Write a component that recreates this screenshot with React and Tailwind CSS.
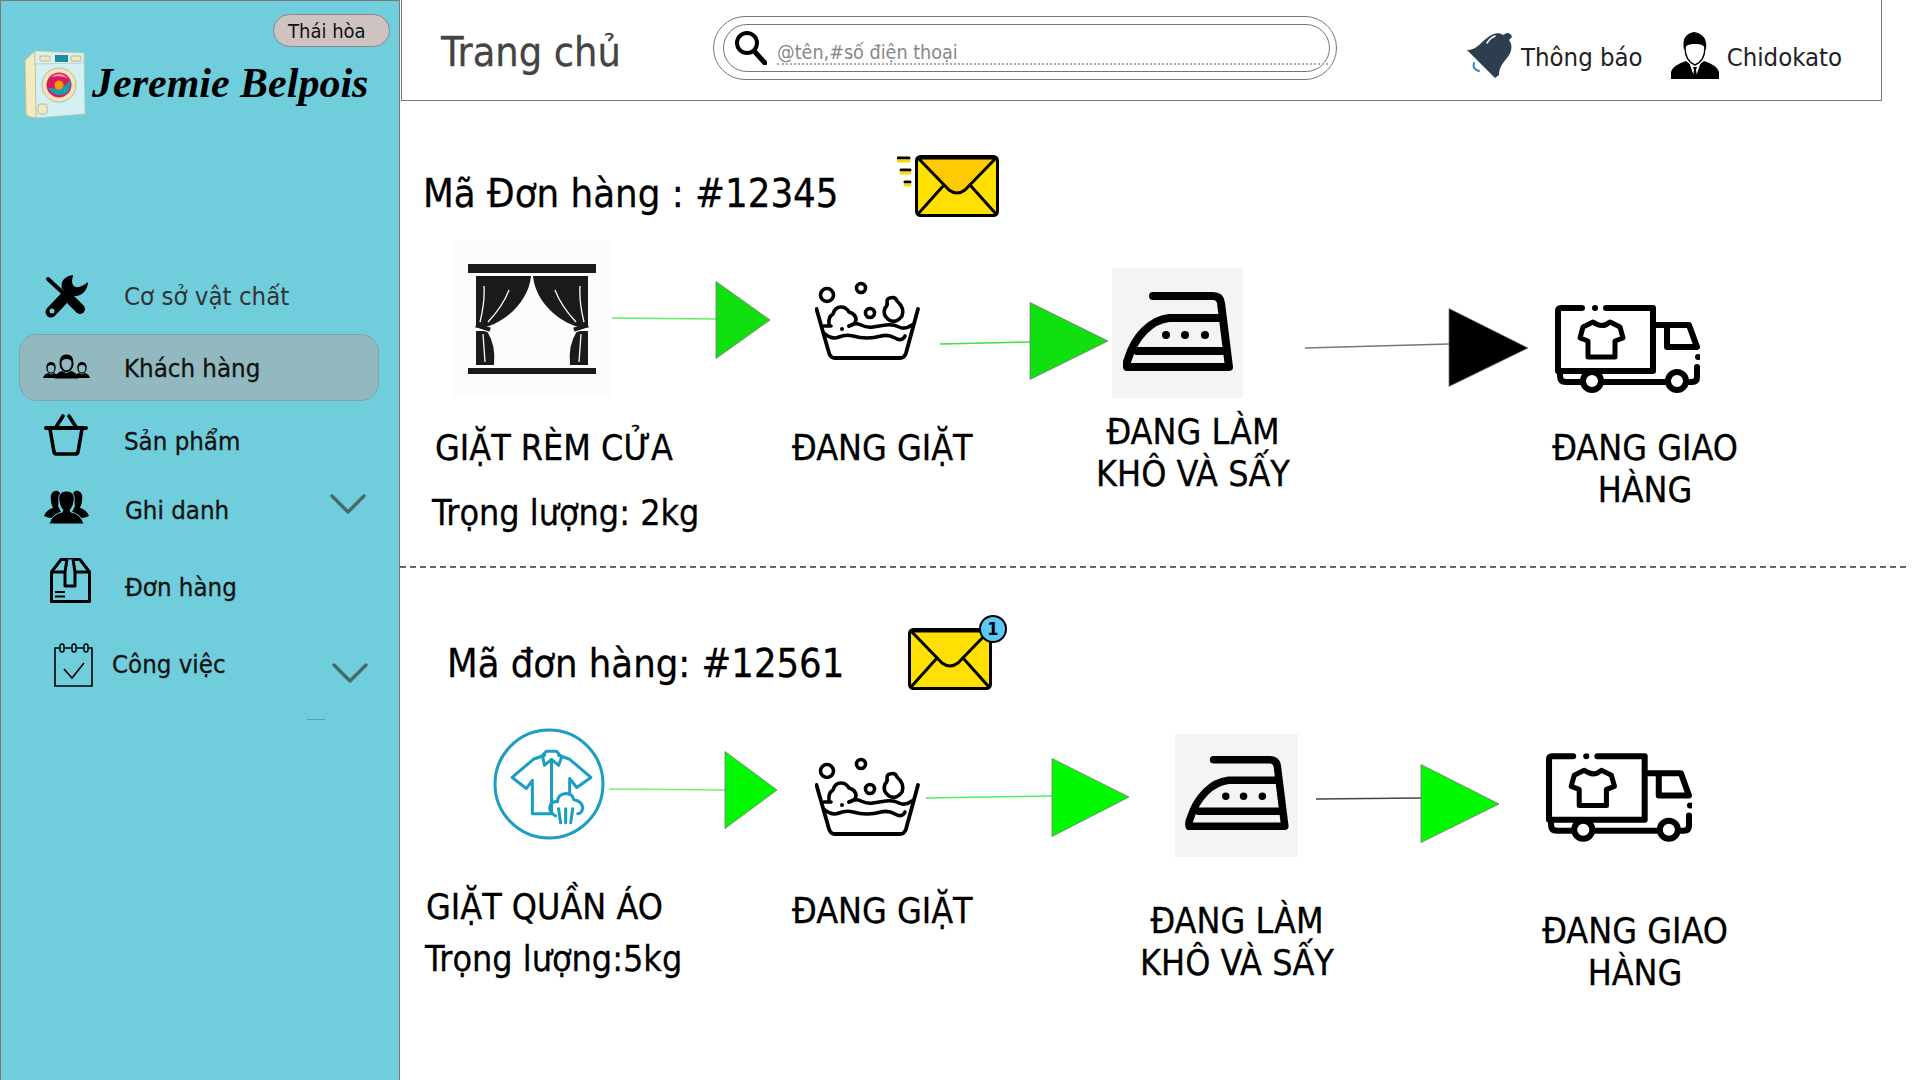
const font = "font-['DejaVu_Sans_Condensed','DejaVu_Sans',sans-serif]";

function Washer() {
  return (
    <svg viewBox="0 0 62 68" className="w-[62px] h-[68px] shrink-0">
      <path d="M1 10 L11 1 L60 3 L61 64 L12 68 Q3 67 2 64 Z" fill="#D3F1F3" stroke="#B9C9B5" strokeWidth="0.8" />
      <path d="M1 10 L11 1 L12 68 Q3 67 2 64 Z" fill="#F2EBC0" stroke="#B9B58F" strokeWidth="0.8" />
      <path d="M11 1 L60 3 L60 13 L11 14 Z" fill="#DDEFEA" stroke="#A9BDB5" strokeWidth="0.6" />
      <rect x="16" y="6" width="10" height="5" rx="1" fill="#EFE9C4" stroke="#8F9A86" strokeWidth="0.6" />
      <rect x="31" y="5" width="13" height="7" fill="#1E8CA0" />
      <rect x="47" y="6" width="10" height="5" rx="1" fill="#EFE9C4" stroke="#8F9A86" strokeWidth="0.6" />
      <circle cx="35" cy="35" r="17" fill="#F3E7B9" stroke="#B9A97F" strokeWidth="0.8" />
      <circle cx="35" cy="35" r="12.5" fill="#D81B60" />
      <path d="M24 38 Q30 48 42 44 Q48 38 46 30 Q40 40 24 38Z" fill="#1E9AA8" />
      <path d="M27 27 Q35 20 44 28 Q36 25 27 27Z" fill="#F48FB1" />
      <circle cx="35" cy="35" r="4.5" fill="#FF9800" />
      <rect x="14" y="54" width="9" height="10" rx="2" fill="#EFE9C4" stroke="#A9A47F" strokeWidth="0.7" />
    </svg>
  );
}

function Tools() {
  return (
    <svg viewBox="0 0 44 44" className="w-[44px] h-[44px]">
      <path d="M3 4 L28 27" stroke="#000" strokeWidth="4" strokeLinecap="round" />
      <path d="M27 26 L35 34" stroke="#000" strokeWidth="10" strokeLinecap="round" />
      <path d="M6 37 L24 18" stroke="#000" strokeWidth="11" strokeLinecap="round" />
      <path d="M17 14 C15 6 20 1 28 0 L27 6 Q27 11 31 12 Q36 13 43 7 C43 16 35 23 26 21 Z" fill="#000" />
      <circle cx="7" cy="36" r="2.5" fill="#70CDDC" />
    </svg>
  );
}

function ClientPerson({ x, y, s }) {
  return (
    <g transform={`translate(${x} ${y}) scale(${s})`}>
      <ellipse cx="8" cy="6" rx="4" ry="5.2" fill="none" stroke="#000" strokeWidth="1.3" />
      <path d="M3.6 6 Q3 0 8 0 Q13 0 12.400 6 Q11 3 8 3 Q5 3 3.600 6Z" fill="#000" />
      <path d="M0 16 Q1 12 5 11 L8 12.500 L11 11 Q15 12 16 16 Z" fill="#000" />
    </g>
  );
}

function Clients() {
  return (
    <svg viewBox="0 0 47 25" className="w-[47px] h-[25px]">
      <ClientPerson x={0} y={8} s={1} />
      <ClientPerson x={31} y={8} s={1} />
      <ClientPerson x={11.5} y={0.5} s={1.5} />
    </svg>
  );
}

function Basket() {
  return (
    <svg viewBox="0 -3 44 43" className="w-[44px] h-[43px]" fill="none" stroke="#000" strokeWidth="3.6" strokeLinejoin="round" strokeLinecap="round">
      <path d="M2 11 H42" strokeWidth="4" />
      <path d="M6 12 L10 35 Q10.5 37 13 37 H31 Q33.5 37 34 35 L38 12" />
      <path d="M12 10 L19 -1 M32 10 L25 -1" />
    </svg>
  );
}

function Users() {
  return (
    <svg viewBox="0 0 45 34" className="w-[45px] h-[34px]" fill="#000">
      <path d="M0 26 Q2 20 9 18 Q6 12 7 5 Q9 0 14 1 L16 3 L14 16 L18 24 L8 28 Q4 28 0 26Z" />
      <path d="M45 26 Q43 20 36 18 Q39 12 38 5 Q36 0 31 1 L29 3 L31 16 L27 24 L37 28 Q41 28 45 26Z" />
      <path d="M22.5 1 C16 1 14 6 15 11 C15.5 15 17 18 19 20 L18 22 Q8 24 5 34 H40 Q37 24 27 22 L26 20 C28 18 29.500 15 30 11 C31 6 29 1 22.5 1Z" stroke="#70CDDC" strokeWidth="1" />
    </svg>
  );
}

function BoxIcon() {
  return (
    <svg viewBox="0 0 41 45" className="w-[41px] h-[45px]" fill="none" stroke="#000" strokeWidth="3" strokeLinejoin="round">
      <path d="M1.500 14 L11 1.500 H30 L39.500 14 V43.500 H1.500 Z" />
      <path d="M1.500 14 H39.500" />
      <path d="M17 1.500 L15 14 V28 H25 V14 L23 1.500" fill="#70CDDC" />
      <path d="M5 34 H15 M5 38.500 H15" strokeWidth="2" />
    </svg>
  );
}

function Calendar() {
  return (
    <svg viewBox="0 0 40 44" className="w-[40px] h-[44px]" fill="none" stroke="#000" strokeWidth="1.4">
      <path d="M1 5 H38 V43 H1 Z" strokeWidth="1.600" />
      <rect x="6" y="1" width="4" height="8" rx="2" fill="#70CDDC" />
      <rect x="18" y="1" width="4" height="8" rx="2" fill="#70CDDC" />
      <rect x="30" y="1" width="4" height="8" rx="2" fill="#70CDDC" />
      <path d="M10 26 L18 35 L30 20" strokeWidth="1.600" />
    </svg>
  );
}

function Chevron({ className }) {
  return (
    <svg viewBox="0 0 36 20" className={className} fill="none" stroke="#456B70" strokeWidth="3.400" strokeLinecap="round" strokeLinejoin="round">
      <path d="M2 2 L18 18 L34 2" />
    </svg>
  );
}

function SearchGlass() {
  return (
    <svg viewBox="0 0 33 35" className="w-[33px] h-[35px] shrink-0" fill="none" stroke="#000">
      <circle cx="13" cy="13" r="10" strokeWidth="4" />
      <path d="M21 22 L31 33" strokeWidth="5" strokeLinecap="round" />
    </svg>
  );
}

function Bell() {
  return (
    <svg viewBox="0 0 46 46" className="w-[46px] h-[46px] shrink-0">
      <path d="M0 17 C10 17 14 9 20 5 C26 0 32 -1 36 2 L40 0 Q44 0 45 4 L42 7 C46 12 45 19 40 25 C36 30 32 34 32 42 L28 45 Z" fill="#2C3E50" />
      <path d="M20 10 Q23 5 28 3" fill="none" stroke="#fff" strokeWidth="1.600" strokeLinecap="round" />
      <path d="M7 30 Q5 36 12 38" fill="none" stroke="#2E86C1" strokeWidth="2" strokeLinecap="round" />
    </svg>
  );
}

function Agent() {
  return (
    <svg viewBox="0 0 48 48" className="w-[48px] h-[48px] shrink-0">
      <path d="M0 47 V40 Q2 33 15 29 L24 36 L33 29 Q46 33 48 40 V47 Z" fill="#000" />
      <path d="M18 30 L24 47 L30 30 L24 35Z" fill="#fff" />
      <path d="M22 35 H26 L25 38 L26.500 47 H21.500 L23 38Z" fill="#000" />
      <path d="M14 15 Q14 29 24 33 Q34 29 34 15" fill="#fff" stroke="#000" strokeWidth="1.400" />
      <path d="M13 18 Q10 2 23 0 Q37 2 35 18 Q33 11 24 12 Q15 11 13 18Z" fill="#000" />
    </svg>
  );
}

function Mail({ className, motion, viewBox }) {
  return (
    <svg viewBox={viewBox} className={className}>
      {motion && (
        <g strokeWidth="3" strokeLinecap="round">
          <path d="M1 3 H12" stroke="#000" /><path d="M1 6 H12" stroke="#FFD800" />
          <path d="M4 15 H13" stroke="#000" /><path d="M4 18 H13" stroke="#FFD800" />
          <path d="M8 27 H13" stroke="#000" /><path d="M8 30 H13" stroke="#FFD800" />
        </g>
      )}
      <g transform={motion ? "translate(18 0)" : ""}>
        <rect x="1.500" y="1.500" width="81" height="59" rx="4" fill="#FFE000" stroke="#000" strokeWidth="3" />
        <path d="M3 3 H81 L50 35 Q42 41 34 35 Z" fill={motion ? "#FFCB00" : "#FFE000"} stroke="#000" strokeWidth="3" strokeLinejoin="round" />
        <path d="M3 59 L29 30 M81 59 L55 30" stroke="#000" strokeWidth="3" strokeLinecap="round" />
      </g>
    </svg>
  );
}

function Curtain() {
  return (
    <svg viewBox="0 0 158 158" className="w-[158px] h-[158px]">
      <rect width="158" height="158" fill="#FCFCFC" />
      <rect x="15" y="24" width="128" height="9" fill="#1a1a1a" />
      <rect x="15" y="128" width="128" height="6" fill="#1a1a1a" />
      <path d="M23 36 H78 C76 58 58 78 36 86 L23 88 Z" fill="#1a1a1a" />
      <path d="M135 36 H80 C82 58 100 78 122 86 L135 88 Z" fill="#1a1a1a" />
      <path d="M23 91 H34 Q43 105 41 125 H23 Z" fill="#1a1a1a" />
      <path d="M135 91 H124 Q115 105 117 125 H135 Z" fill="#1a1a1a" />
      <path d="M23 85 L37 90 M135 85 L121 90" stroke="#1a1a1a" strokeWidth="5" />
      <path d="M27 82 Q32 62 31 46 M35 82 Q50 66 56 50 M131 82 Q126 62 127 46 M123 82 Q108 66 102 50 M30 94 L32 122 M128 94 L126 122 M23 88 L36 92 M135 88 L122 92" stroke="#fcfcfc" strokeWidth="1.300" fill="none" />
    </svg>
  );
}

function Basin({ className }) {
  return (
    <svg viewBox="0 0 107 81" className={className} fill="none" stroke="#000" strokeWidth="3.600" strokeLinecap="round" strokeLinejoin="round">
      <path d="M1.500 28 L14 72 Q15.500 77 20 77 H85 Q89.500 77 91 72 L103 28" strokeWidth="3.800" />
      <path d="M9 45 H16 M34 45 Q40 41 46 44 T58 46 T71 44 T84 46 T97 44" />
      <path d="M10 53 Q17 59 24 56 T38 55 T52 57 T66 55 T80 57 T90 55" />
      <circle cx="12" cy="14" r="6.500" />
      <circle cx="46" cy="7" r="4.500" />
      <circle cx="55" cy="32" r="4.500" />
      <path d="M75 17 Q80 15 82 20 Q90 27 87 35 Q81 43 74 39 Q67 34 70 27 Q73 24 72 21 Q72 17 75 17Z" />
      <path d="M14 43 Q13 36 18 33 Q20 26 26 26 Q31 26 34 31 Q41 33 41 39 Q40 44 34 45" />
      <circle cx="27" cy="48" r="2" fill="#000" stroke="none" />
    </svg>
  );
}

function Iron({ className }) {
  return (
    <svg viewBox="0 0 110 80" className={className} fill="none" stroke="#000" strokeWidth="8" strokeLinecap="round" strokeLinejoin="round">
      <path d="M30 5 H90 Q97 5 98 12 L106 76 H4 Q3 72 5 68 C12 45 28 29 46 27 H99" />
      <path d="M14 60 H103" />
      <g fill="#000" stroke="none">
        <circle cx="43" cy="44" r="4" /><circle cx="62" cy="44" r="4" /><circle cx="82" cy="44" r="4" />
      </g>
    </svg>
  );
}

function Truck({ className }) {
  return (
    <svg viewBox="0 0 145 88" className={className} fill="none" stroke="#000" strokeWidth="6" strokeLinecap="round" strokeLinejoin="round">
      <path d="M27 3 H6 Q3 3 3 6 V65 M51 3 H98 V66 H3" />
      <circle cx="40" cy="3" r="3" fill="#000" stroke="none" />
      <path d="M99 20 H134 L142 42 H112 V20" />
      <circle cx="143" cy="52" r="3" fill="#000" stroke="none" />
      <path d="M142 62 V72 Q142 77 137 77 H134 M110 77 H49 M25 77 H11 Q5 77 5 71 V67" />
      <circle cx="37" cy="76" r="9" />
      <circle cx="122" cy="76" r="9" />
      <path d="M38 17 L28 22 L25 33 L33 36 V52 H60 V36 L68 33 L65 22 L55 17 Q47 24 38 17 Z" strokeWidth="5" />
    </svg>
  );
}

function ShirtCircle({ className }) {
  return (
    <svg viewBox="0 0 111 111" className={className} fill="none" stroke="#1B9EC2" strokeWidth="3" strokeLinejoin="round" strokeLinecap="round">
      <ellipse cx="55.500" cy="55.500" rx="53.500" ry="53.500" />
      <path d="M51 27 L40 31 L19 49 L33 60 L39 52 V85 H59 M65 27 L76 31 L97 49 L83 59 L76 50 V66" />
      <path d="M58 32 V84" />
      <path d="M49 27 L53 23 H63 L68 29 L65 37 L58 31 L51 37 Z" />
      <path d="M62 87 Q54 83 57 76 Q60 72 64 73 Q64 66 72 65 Q79 65 80 71 Q88 72 89 79 Q88 85 84 85" />
      <path d="M65 80 L67 94 M72 80 V94 M79 80 L77 94" />
    </svg>
  );
}

function Arrow({ className, w, h, y1, y2, tx, apex, fill, line }) {
  return (
    <svg viewBox={`0 0 ${w} ${h}`} className={className}>
      <path d={`M0 ${y1} L${tx} ${y2}`} stroke={line} strokeWidth="1.500" fill="none" />
      <path d={`M${tx} 0.500 L${w - 1} ${apex} L${tx} ${h - 0.5} Z`} fill={fill} stroke="#777" strokeWidth="0.800" />
    </svg>
  );
}

function NavRow({ icon, label, active, textClass, chevron }) {
  return (
    <div className={active ? "flex items-center h-[67px] mx-[18px] w-[360px] bg-[#93B9C0] border border-[#7FA6AD] rounded-[18px]" : "flex items-center mx-[18px] w-[360px] h-full"}>
      {icon}
      <span className={textClass}>{label}</span>
      {chevron}
    </div>
  );
}

const navText = "text-[25.6px] leading-[32px] text-[#111] [-webkit-text-stroke:0.3px_#111]";

function Sidebar() {
  return (
    <aside className="w-[400px] h-[1080px] shrink-0 bg-[#70CDDC] border-x border-t border-[#7a7a7a] flex flex-col">
      <div className="mt-[13px] mr-[9px] self-end w-[117px] h-[33px] rounded-full bg-[#CFC2C3] border border-[#8a8a8a] flex items-center pl-[14px] text-[20px] leading-none text-[#111]">Thái hòa</div>
      <div className="mt-[3px] ml-[23px] h-[68px] flex items-start">
        <Washer />
        <span className="ml-[6px] mt-[7px] text-[42px] leading-[52px] whitespace-nowrap italic font-bold text-black font-['Liberation_Serif',serif]">Jeremie Belpois</span>
      </div>
      <nav className="mt-[150px] flex flex-col">
        <div className="h-[66px]">
          <NavRow
            icon={<span className="ml-[26px] mt-[-8px] w-[79px] shrink-0"><Tools /></span>}
            label="Cơ sở vật chất"
            textClass="text-[25.6px] leading-[32px] text-[#333] mt-[-10px]"
          />
        </div>
        <NavRow
          active
          icon={<span className="ml-[23px] mt-[-2px] w-[81px] shrink-0"><Clients /></span>}
          label="Khách hàng"
          textClass={navText}
        />
        <div className="h-[80px]">
          <NavRow
            icon={<span className="ml-[25px] mt-[-12px] w-[80px] shrink-0"><Basket /></span>}
            label="Sản phẩm"
            textClass={navText}
          />
        </div>
        <div className="h-[58px]">
          <NavRow
            icon={<span className="ml-[25px] mt-[-6px] w-[81px] shrink-0"><Users /></span>}
            label="Ghi danh"
            textClass={navText}
            chevron={<Chevron className="ml-auto mr-[13px] mt-[-12px] w-[36px] h-[20px]" />}
          />
        </div>
        <div className="h-[96px]">
          <NavRow
            icon={<span className="ml-[31px] mt-[-13px] w-[75px] shrink-0"><BoxIcon /></span>}
            label="Đơn hàng"
            textClass={navText}
            chevron={null}
          />
        </div>
        <div className="h-[58px]">
          <NavRow
            icon={<span className="ml-[35px] mt-[2px] w-[58px] shrink-0"><Calendar /></span>}
            label="Công việc"
            textClass={navText}
            chevron={<Chevron className="ml-auto mr-[11px] mt-[18px] w-[36px] h-[20px]" />}
          />
        </div>
      </nav>
      <div className="mt-[26px] ml-[306px] w-[18px] h-px bg-[#4FA5B5]" />
    </aside>
  );
}

function Header() {
  return (
    <header className="ml-px w-[1481px] h-[101px] border-x border-b border-[#7a7a7a] flex items-start bg-white">
      <h1 className="w-[311px] shrink-0 pl-[39px] mt-[26px] text-[41px] leading-[52px] font-normal text-[#444] whitespace-nowrap [-webkit-text-stroke:0.3px_#444]">Trang chủ</h1>
      <div className="mt-[16px] w-[624px] h-[64px] shrink-0 rounded-full border border-[#777] pl-[9px] pr-[6px] py-[7px]">
        <div className="w-full h-full rounded-full border border-[#777] flex items-start pl-[10px]">
          <div className="mt-[5px]"><SearchGlass /></div>
          <div className="ml-[10px] mt-[15px] w-[551px] h-[25px] border-b-2 border-dotted border-[#aaa] text-[19.6px] leading-[25px] text-[#888] whitespace-nowrap">@tên,#số điện thoại</div>
        </div>
      </div>
      <div className="ml-[130px] mt-[33px] flex items-start">
        <Bell />
        <span className="ml-[8px] mt-[7px] text-[25.5px] leading-[34px] text-[#222] whitespace-nowrap">Thông báo</span>
      </div>
      <div className="ml-[28px] mt-[32px] flex items-start">
        <Agent />
        <span className="ml-[8px] mt-[8px] text-[25.5px] leading-[34px] text-[#222] whitespace-nowrap">Chidokato</span>
      </div>
    </header>
  );
}

const labelText = "absolute text-[35.6px] whitespace-nowrap text-black [-webkit-text-stroke:0.3px_#000]";

function OrderOne() {
  return (
    <section className="relative w-[1506px] h-[467px] border-b-2 border-dashed border-[#666]">
      <h2 className="absolute left-[23px] top-[67px] text-[39.7px] leading-[50px] font-normal whitespace-nowrap text-black [-webkit-text-stroke:0.3px_#000]">Mã Đơn hàng : #12345</h2>
      <div className="absolute left-[497px] top-[54px]"><Mail motion viewBox="0 0 102 62" className="w-[102px] h-[62px]" /></div>
      <div className="absolute left-[53px] top-[139px]"><Curtain /></div>
      <Arrow className="absolute left-[212px] top-[180px] w-[159px] h-[78px]" w={159} h={78} y1={37} y2={38} tx={104} apex={39} fill="#10E010" line="#66EE66" />
      <Basin className="absolute left-[415px] top-[180px] w-[107px] h-[81px]" />
      <Arrow className="absolute left-[540px] top-[201px] w-[169px] h-[78px]" w={169} h={78} y1={42} y2={40} tx={90} apex={39} fill="#10E010" line="#44DD44" />
      <div className="absolute left-[712px] top-[167px] w-[131px] h-[130px] bg-[#F4F4F4] flex items-center justify-center"><Iron className="w-[110px] h-[80px] mt-[-5px]" /></div>
      <Arrow className="absolute left-[905px] top-[207px] w-[224px] h-[79px]" w={224} h={79} y1={40} y2={36} tx={144} apex={40} fill="#000" line="#777" />
      <Truck className="absolute left-[1155px] top-[204px] w-[145px] h-[88px]" />
      <div className={`${labelText} left-[35px] top-[326px] leading-[42px]`}>GIẶT RÈM CỬA</div>
      <div className={`${labelText} left-[32px] top-[391px] leading-[42px]`}>Trọng lượng: 2kg</div>
      <div className={`${labelText} left-[392px] top-[326px] leading-[42px]`}>ĐANG GIẶT</div>
      <div className={`${labelText} left-[673px] top-[310px] w-[240px] text-center leading-[42px]`}>ĐANG LÀM<br />KHÔ VÀ SẤY</div>
      <div className={`${labelText} left-[1125px] top-[326px] w-[240px] text-center leading-[42px]`}>ĐANG GIAO<br />HÀNG</div>
    </section>
  );
}

function OrderTwo() {
  return (
    <section className="relative w-[1506px] h-[512px]">
      <h2 className="absolute left-[47px] top-[70px] text-[39.5px] leading-[50px] font-normal whitespace-nowrap text-black [-webkit-text-stroke:0.3px_#000]">Mã đơn hàng: #12561</h2>
      <div className="absolute left-[506px] top-[60px]"><Mail viewBox="0 0 84 62" className="w-[88px] h-[62px]" /></div>
      <div className="absolute left-[579px] top-[47px] w-[28px] h-[28px] rounded-full bg-[#5BC8F5] border-2 border-black flex items-center justify-center text-[18px] leading-none font-bold text-black">1</div>
      <ShirtCircle className="absolute left-[93px] top-[160px] w-[112px] h-[112px]" />
      <Arrow className="absolute left-[209px] top-[183px] w-[169px] h-[78px]" w={169} h={78} y1={38} y2={39} tx={116} apex={39} fill="#00F800" line="#77EE77" />
      <Basin className="absolute left-[415px] top-[189px] w-[107px] h-[81px]" />
      <Arrow className="absolute left-[526px] top-[190px] w-[204px] h-[79px]" w={204} h={79} y1={40} y2={38} tx={126} apex={39} fill="#00F800" line="#55EE55" />
      <div className="absolute left-[775px] top-[166px] w-[123px] h-[123px] bg-[#F4F4F4] flex items-center justify-center"><Iron className="w-[104px] h-[75px] mt-[-7px]" /></div>
      <Arrow className="absolute left-[916px] top-[196px] w-[184px] h-[79px]" w={184} h={79} y1={35} y2={34} tx={105} apex={40} fill="#00F800" line="#444" />
      <Truck className="absolute left-[1146px] top-[185px] w-[146px] h-[89px]" />
      <div className={`${labelText} left-[26px] top-[318px] leading-[42px]`}>GIẶT QUẦN ÁO</div>
      <div className={`${labelText} left-[25px] top-[370px] leading-[42px]`}>Trọng lượng:5kg</div>
      <div className={`${labelText} left-[392px] top-[322px] leading-[42px]`}>ĐANG GIẶT</div>
      <div className={`${labelText} left-[717px] top-[332px] w-[240px] text-center leading-[42px]`}>ĐANG LÀM<br />KHÔ VÀ SẤY</div>
      <div className={`${labelText} left-[1115px] top-[342px] w-[240px] text-center leading-[42px]`}>ĐANG GIAO<br />HÀNG</div>
    </section>
  );
}

export default function App() {
  return (
    <div className={`flex w-[1920px] h-[1080px] overflow-hidden bg-white ${font}`}>
      <Sidebar />
      <main className="flex-1 flex flex-col">
        <Header />
        <OrderOne />
        <OrderTwo />
      </main>
    </div>
  );
}
